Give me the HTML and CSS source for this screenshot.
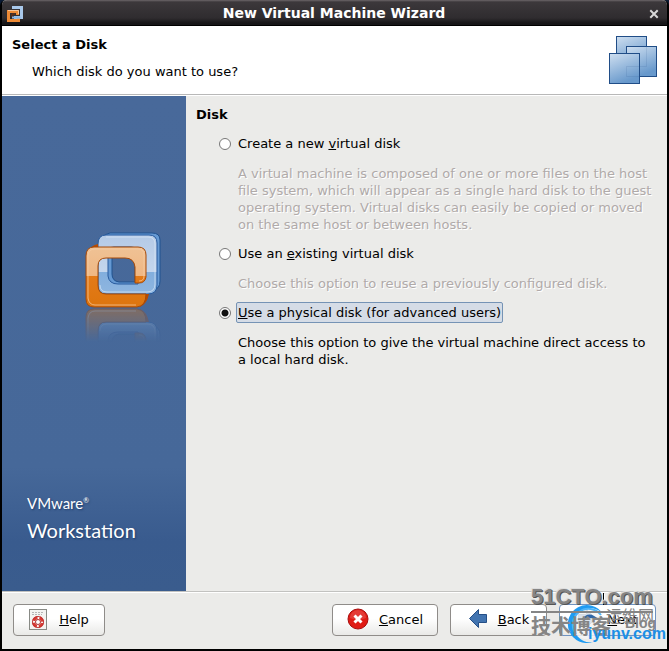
FILE: index.html
```html
<!DOCTYPE html>
<html lang="en">
<head>
  <meta charset="utf-8">
  <title>New Virtual Machine Wizard</title>
  <link rel="stylesheet" href="styles.css">
</head>
<body>
  <form class="window" onsubmit="return false">
    <header class="titlebar">
      <svg class="title-icon" width="16" height="16" viewBox="0 0 16 16" fill="none">
        <path d="M5 1.500H14.500V11.500H7" stroke="#a9c8ea" stroke-width="3"/>
        <path d="M10.500 9V5.500H1.500V14.500H11.500V12.500" stroke="#ee8a35" stroke-width="3"/>
        <path d="M1 4.500H11.500V8" stroke="#f6c49a"/>
        <path d="M5 11V8H8" stroke="#7a2c08"/>
        <path d="M5 11.500H13.500" stroke="#8ab4e2" stroke-width="2"/>
      </svg>
      <h1 class="title">New Virtual Machine Wizard</h1>
      <button type="button" class="close" aria-label="Close">
        <svg width="10" height="10" viewBox="0 0 10 10"><path d="M2 2L8 8M8 2L2 8" stroke="#d8d8d8" stroke-width="2" stroke-linecap="square"/></svg>
      </button>
    </header>

    <div class="heading">
      <div>
        <h2>Select a Disk</h2>
        <p>Which disk do you want to use?</p>
      </div>
      <svg width="48" height="48" viewBox="0 0 48 48">
        <defs>
          <linearGradient id="tile" x1="0" y1="0" x2="0.4" y2="1">
            <stop offset="0" stop-color="#cfdff0"/>
            <stop offset="1" stop-color="#6899cc"/>
          </linearGradient>
        </defs>
        <g fill="url(#tile)" stroke="#204d87">
          <rect x="7.500" y="0.500" width="30" height="30"/>
          <rect x="17.500" y="10.500" width="30" height="30"/>
          <rect x="0.500" y="17.500" width="30" height="30"/>
        </g>
        <path d="M31 40.500H17.500V30.500H30.500M37.500 11V30.500H31" fill="none" stroke="#204d87" stroke-opacity="0.120"/>
      </svg>
    </div>

    <div class="main">
      <aside class="banner">
        <svg class="logo" width="78" height="120" viewBox="0 0 78 120">
          <defs>
            <linearGradient id="orange" x1="0" y1="0" x2="0" y2="1">
              <stop offset="0" stop-color="#efc295"/>
              <stop offset="0.480" stop-color="#f0b783"/>
              <stop offset="0.480" stop-color="#e37a18"/>
              <stop offset="1" stop-color="#dd750e"/>
            </linearGradient>
            <linearGradient id="blue" x1="0" y1="0" x2="0" y2="1">
              <stop offset="0" stop-color="#b4cae6"/>
              <stop offset="0.620" stop-color="#c4d6ed"/>
              <stop offset="0.620" stop-color="#82aedd"/>
              <stop offset="1" stop-color="#8fb6e0"/>
            </linearGradient>
            <linearGradient id="fade" x1="0" y1="76" x2="0" y2="110" gradientUnits="userSpaceOnUse">
              <stop offset="0" stop-color="#fff" stop-opacity="0.400"/>
              <stop offset="1" stop-color="#fff" stop-opacity="0"/>
            </linearGradient>
            <mask id="fade-mask"><rect y="76" width="78" height="44" fill="url(#fade)"/></mask>
            <g id="rings">
              <path fill="#6599d3" stroke="#20528f" fill-rule="evenodd" d="M24 1H66Q74 1 74 8V49Q74 57 67 58H23Q15 58 15 50V10Q16 3 24 1ZM32 16Q26 16 26 23V42Q26 49 33 50H49V23Q49 16 42 16Z"/>
              <path fill="url(#blue)" stroke="#285b9e" fill-rule="evenodd" d="M20 3H63Q71 3 71 11V53Q71 62 62 62H20Q12 62 12 54V12Q12 3 20 3ZM28 15Q22 15 22 22V44Q23 52 32 52H52V23Q52 15 45 15Z"/>
              <path fill="none" stroke="#dce8f6" stroke-opacity="0.700" d="M20 5H62Q69 5 69 12V52Q69 60 61 60H21Q14 60 14 53"/>
              <path fill="#b94b00" d="M2 20Q5 13 12 12V18ZM54 75Q61 72 63 62H54Z"/>
              <path fill="url(#orange)" stroke="#a64a09" fill-rule="evenodd" d="M8 15H52Q60 15 60 23V45Q59 51 53 51H49V35Q48 26 39 26H20Q12 26 12 34V53Q12 62 20 62H60Q60 74 51 75H8Q0 75 0 67V24Q0 15 8 15Z"/>
              <path fill="none" stroke="#f7cda6" stroke-opacity="0.700" d="M2 66V24Q2 17 9 17H52Q58 17 58 23V44Q58 49 53 49M2 66Q3 73 9 73H50"/>
            </g>
          </defs>
          <use href="#rings" x="3"/>
          <g mask="url(#fade-mask)"><use href="#rings" transform="translate(3 152) scale(1 -1)"/></g>
        </svg>
        <p class="brand">VMware<sup>®</sup></p>
        <p class="product">Workstation</p>
      </aside>

      <fieldset class="options">
        <legend>Disk</legend>
        <div class="option">
          <input type="radio" name="disk" id="create">
          <label for="create">Create a new <u>v</u>irtual disk</label>
        </div>
        <p class="hint muted">A virtual machine is composed of one or more files on the host file system, which will appear as a single hard disk to the guest operating system. Virtual disks can easily be copied or moved on the same host or between hosts.</p>
        <div class="option">
          <input type="radio" name="disk" id="existing">
          <label for="existing">Use an <u>e</u>xisting virtual disk</label>
        </div>
        <p class="hint muted">Choose this option to reuse a previously configured disk.</p>
        <div class="option">
          <input type="radio" name="disk" id="physical" checked>
          <label for="physical"><u>U</u>se a physical disk (for advanced users)</label>
        </div>
        <p class="hint">Choose this option to give the virtual machine direct access to a local hard disk.</p>
      </fieldset>
    </div>

    <footer class="actions">
      <button type="button" class="button help">
        <svg width="18" height="21" viewBox="0 0 18 21" fill="none">
          <rect x="0.500" y="0.500" width="17" height="20" fill="#f3f3f1" stroke="#888a85"/>
          <path d="M3 3.500H15M3 5.500H13" stroke="#b5b5b5" stroke-dasharray="2 1"/>
          <circle cx="9" cy="13" r="4.500" stroke="#fff" stroke-width="3"/>
          <circle cx="9" cy="13" r="4.500" stroke="#db3a32" stroke-width="3" stroke-dasharray="5 2.070" stroke-dashoffset="-1"/>
          <circle cx="9" cy="13" r="5.500" stroke="#b33"/>
          <circle cx="9" cy="13" r="2.500" fill="#fff" stroke="#a33"/>
        </svg>
        <span><u>H</u>elp</span>
      </button>
      <button type="button" class="button cancel">
        <svg width="22" height="22" viewBox="0 0 22 22">
          <circle cx="11" cy="11" r="10" fill="#e01b14" stroke="#a80d0d"/>
          <path d="M3 10A8 8 0 0 1 19 10Q11 13 3 10Z" fill="#fff" fill-opacity="0.150"/>
          <path d="M7.500 7.500L14.500 14.500M14.500 7.500L7.500 14.500" stroke="#fff" stroke-width="3"/>
        </svg>
        <span><u>C</u>ancel</span>
      </button>
      <button type="button" class="button">
        <svg width="20" height="20" viewBox="0 0 20 20">
          <path d="M1.500 9.500L10.500 0.500V5.500H18.500V13.500H10.500V18.500Z" fill="#4274b0" stroke="#254f87"/>
        </svg>
        <span><u>B</u>ack</span>
      </button>
      <button type="button" class="button next">
        <svg width="20" height="20" viewBox="0 0 20 20">
          <path d="M18.500 9.500L9.500 0.500V5.500H1.500V13.500H9.500V18.500Z" fill="#4274b0" stroke="#254f87"/>
        </svg>
        <span><u>N</u>ext</span>
      </button>
    </footer>

    <div class="watermark">
      <svg class="pointer" width="4" height="14" viewBox="0 0 4 14">
        <path d="M1.500 1V13" stroke="#000"/>
        <path d="M2.500 2V12" stroke="#fff"/>
      </svg>
      <svg class="wm-swirl" width="40" height="40" viewBox="0 0 40 40">
        <circle cx="21" cy="20" r="16" fill="#f4f4f4" fill-opacity="0.850"/>
        <path d="M37 11A19 19 0 1 0 27 39A17 17 0 1 1 37 11Z" fill="#1f9bf2"/>
        <path d="M35 12A15 15 0 0 0 10 31" fill="none" stroke="#4db4f8" stroke-width="2"/>
        <path d="M15 17Q23 6 33 17Q24 13 15 17Z" fill="#2e66a8"/>
      </svg>
      <span class="wm-site">51CTO.com</span>
      <span class="wm-tech">技术博客</span>
      <span class="wm-blog">Blog</span>
      <span class="wm-ops">运维网</span>
      <span class="wm-url">iyunv.com</span>
    </div>
  </form>
</body>
</html>
```

FILE: styles.css
```css
* {
  box-sizing: border-box;
}

body {
  margin: 0;
  background: #0a1a33;
  color: #000;
  font-family: "DejaVu Sans", sans-serif;
  font-size: 13px;
  line-height: 17px;
}

h1, h2, p {
  margin: 0;
  font-size: 13px;
}

.window {
  position: relative;
  display: flex;
  flex-direction: column;
  min-height: 100vh;
  border: 2px solid #000;
  border-top: 0;
  border-radius: 6px 6px 0 0;
  background: #ebebe9;
}

/* title bar */
.titlebar {
  display: flex;
  align-items: center;
  height: 26px;
  padding: 2px 4px 0 5px;
  background: linear-gradient(#6c6669 0, #3c383b 2px, #2f2c2f 18px, #171618 23px);
  border-bottom: 1px solid #000;
  border-radius: 5px 5px 0 0;
  color: #fff;
}

.title {
  flex: 1;
  font-size: 14px;
  text-align: center;
}

.close {
  display: flex;
  padding: 4px;
  border: 0;
  background: none;
}

/* page heading */
.heading {
  display: flex;
  justify-content: space-between;
  height: 69px;
  padding: 10px;
  background: #fff;
  border-bottom: 1px solid #b8b8b8;
}

.heading p {
  margin: 10px 0 0 20px;
}

/* body */
.main {
  flex: 1;
  display: flex;
  border-top: 1px solid #fff;
}

.banner {
  display: flex;
  flex-direction: column;
  width: 184px;
  padding: 136px 25px 44px;
  background: linear-gradient(#48699a, #466899 75%, #395b8e 90%, #3a5c8d);
  color: #fff;
  font-family: Lato, "Open Sans", sans-serif;
  text-shadow: 1px 1px 2px #1f3d6b;
}

.logo {
  flex: none;
  align-self: flex-end;
  margin-bottom: auto;
}

.brand {
  font-size: 15px;
  line-height: 20px;
}

.brand sup {
  font-size: 7px;
  line-height: 7px;
  vertical-align: 6px;
}

.product {
  font-size: 20px;
  line-height: 34px;
}

.options {
  flex: 1;
  min-width: 0;
  margin: 0;
  padding: 10px 10px 0;
  border: 0;
}

.options legend {
  float: left;
  width: 100%;
  padding: 0;
  margin-bottom: 10px;
  font-weight: bold;
}

.option {
  clear: both;
  display: flex;
  align-items: center;
  gap: 5px;
  padding-left: 23px;
}

.option input {
  appearance: none;
  width: 12px;
  height: 12px;
  margin: 0;
  border: 1px solid #777;
  border-radius: 50%;
  background: #fff;
}

.option input:checked {
  background: radial-gradient(circle, #111 0 3px, #fff 4px);
}

.option label {
  padding: 1px;
  border: 1px solid transparent;
  border-radius: 2px;
}

.option input:checked + label {
  border-color: #7593b5;
  background: #d5dce6;
}

.hint {
  margin: 11px 0 10px 42px;
}

.muted {
  color: #b0aaa9;
  text-shadow: 1px 1px 0 #fff;
}

/* bottom buttons */
.actions {
  display: flex;
  gap: 12px;
  height: 58px;
  padding: 12px 11px;
  border-top: 1px solid #c2c2c0;
  box-shadow: inset 0 1px #fff;
}

.button {
  display: flex;
  align-items: center;
  justify-content: center;
  gap: 10px;
  min-width: 97px;
  height: 32px;
  padding: 0 14px 2px;
  border: 1px solid #8f8c89;
  border-radius: 4px;
  background: linear-gradient(#fff 45%, #e9e9e7);
  color: #000;
  font: inherit;
}

.help {
  gap: 12px;
  min-width: 92px;
  margin-right: auto;
}

.next {
  border-color: #6f93c0;
}

/* site mark in the corner */
.watermark {
  position: absolute;
  right: 0;
  bottom: 0;
  width: 136px;
  height: 66px;
  color: #858585;
  white-space: nowrap;
  pointer-events: none;
}

.watermark > * {
  position: absolute;
}

.pointer {
  left: 71px;
  top: 9px;
}

.wm-site {
  left: 0;
  top: 0;
  border-bottom: 2px solid #858585;
  font: bold 22px/28px "Liberation Sans", sans-serif;
  text-shadow: 1px 1px 0 #555, -1px -1px 0 #ddd;
}

.wm-tech {
  left: 0;
  top: 32px;
  font: bold 20px/22px "Noto Sans CJK SC", sans-serif;
}

.wm-blog {
  left: 94px;
  top: 31px;
  font: bold 14px/18px "Liberation Sans", sans-serif;
}

.wm-ops {
  left: 75px;
  top: 23px;
  font: 16px/18px "Noto Sans CJK SC", sans-serif;
}

.wm-swirl {
  left: 35px;
  top: 20px;
}

.wm-url {
  left: 57px;
  top: 41px;
  color: #1b8fe6;
  font: bold 16px/20px "Liberation Sans", sans-serif;
}
```
